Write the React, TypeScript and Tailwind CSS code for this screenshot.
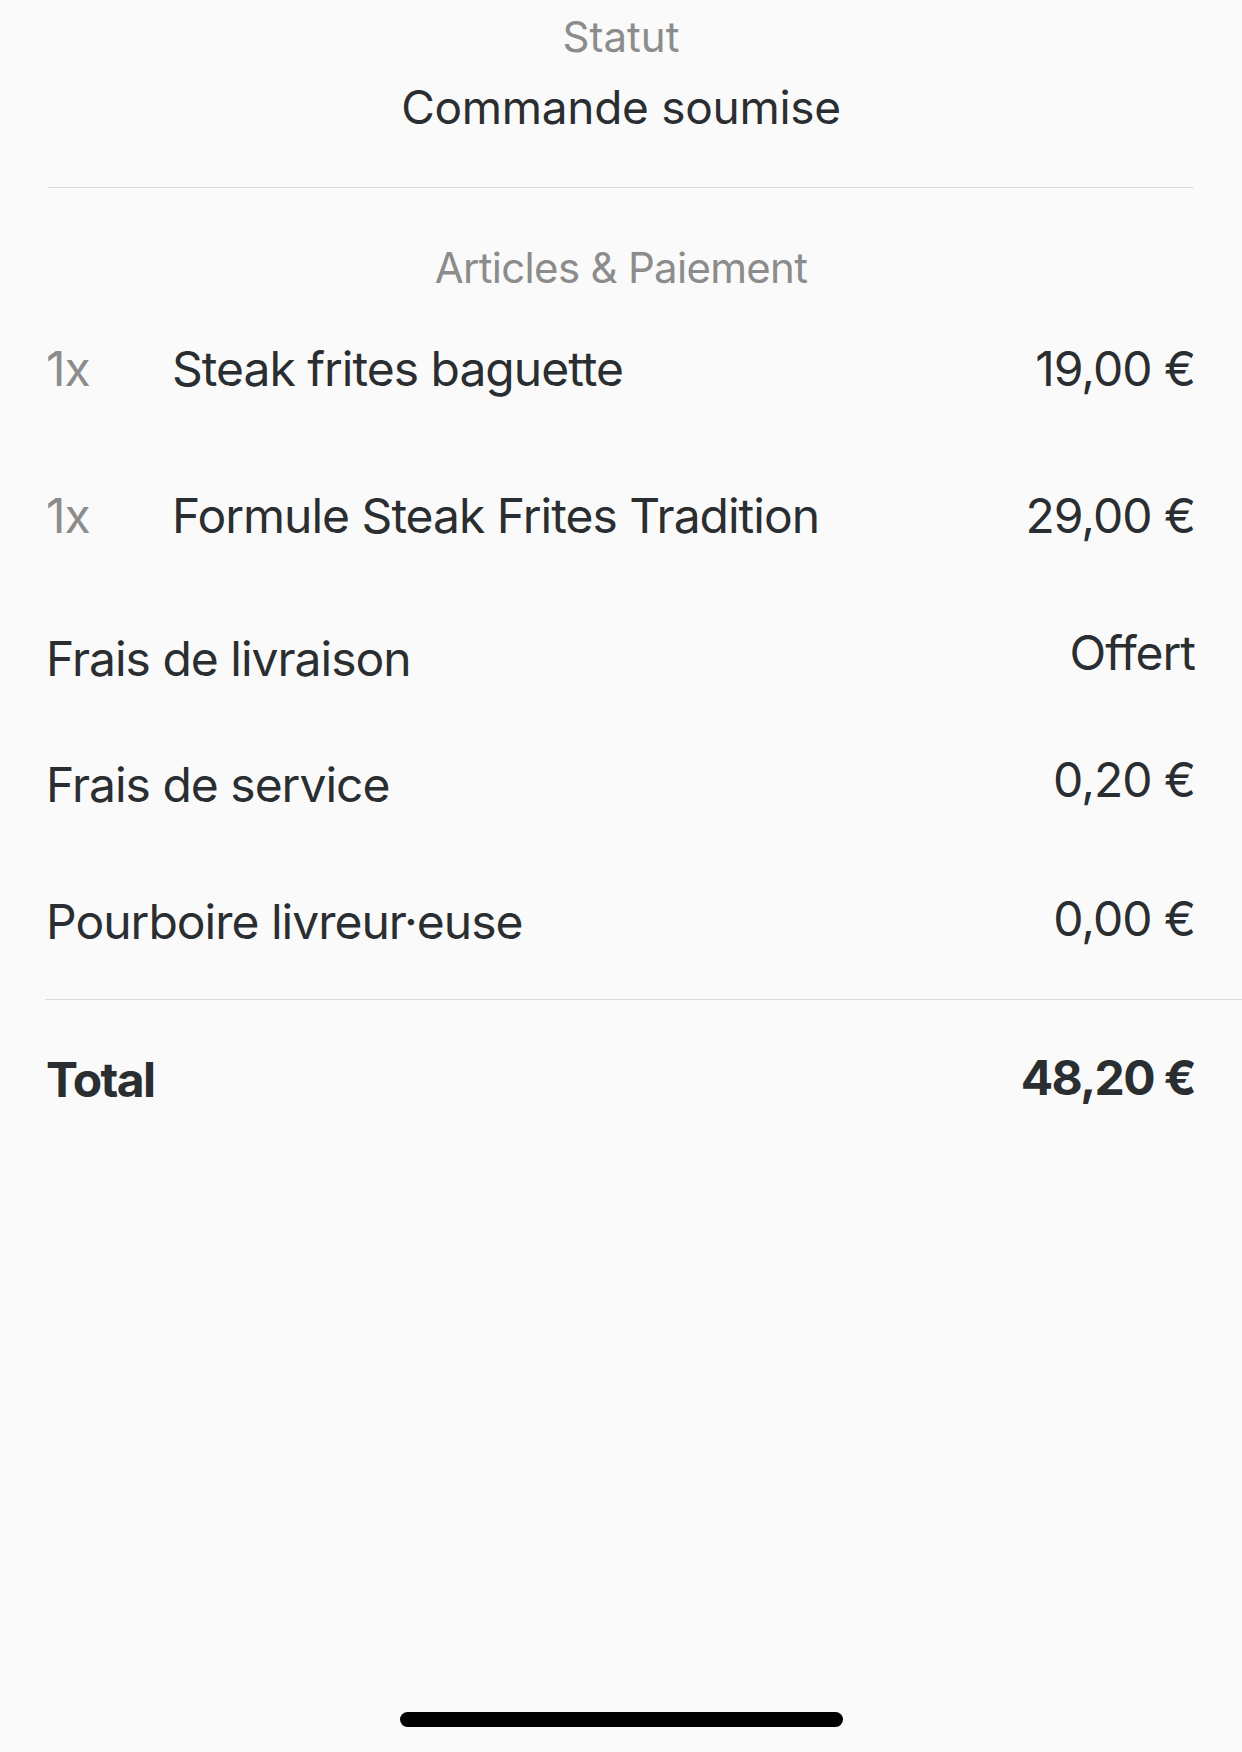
const lines = [
  { qty: '1x', label: 'Steak frites baguette', value: '19,00 €', h: 'h-[141px]', lift: '' },
  { qty: '1x', label: 'Formule Steak Frites Tradition', value: '29,00 €', h: 'h-[153px]', lift: '' },
  { qty: '', label: 'Frais de livraison', value: 'Offert', h: 'h-[133px]', lift: 'pb-[12px]' },
  { qty: '', label: 'Frais de service', value: '0,20 €', h: 'h-[119px]', lift: 'pb-[10px]' },
  { qty: '', label: 'Pourboire livreur·euse', value: '0,00 €', h: 'h-[155px]', lift: 'pb-[6px]' },
];

export default function App() {
  return (
    <div className="w-[1242px] h-[1752px] bg-[#fafafa] text-[#2b2e30] font-['Inter','Noto_Sans',sans-serif] flex flex-col relative overflow-hidden">
      <div className="h-[74px] leading-[74px] text-center text-[42px] text-[#8c8c8c]">Statut</div>
      <div className="h-[67px] leading-[67px] text-center text-[46px] tracking-[-0.3px]">Commande soumise</div>
      <div className="mt-[46px] mx-[48px] h-px bg-[#dcdcdc]" />

      <div className="mt-[50px] h-[60px] leading-[60px] text-center text-[42px] tracking-[-0.7px] text-[#8c8c8c]">
        Articles &amp; Paiement
      </div>

      {lines.map((l) => (
        <div key={l.label} className={`${l.h} flex items-center pl-[46px] pr-[47px] text-[48px] tracking-[-1px]`}>
          {l.qty && <span className="w-[126px] text-[#8c8c8c]">{l.qty}</span>}
          <span className="flex-1">{l.label}</span>
          <span className={l.lift}>{l.value}</span>
        </div>
      ))}

      <div className="ml-[45px] h-px bg-[#dcdcdc]" />

      <div className="h-[159px] flex items-center pl-[46px] pr-[47px] text-[48px] font-bold tracking-[-1.6px]">
        <span className="flex-1">Total</span>
        <span className="pb-[4px]">48,20 €</span>
      </div>

      <div className="absolute left-[400px] top-[1712px] w-[443px] h-[15px] rounded-full bg-black" />
    </div>
  );
}
